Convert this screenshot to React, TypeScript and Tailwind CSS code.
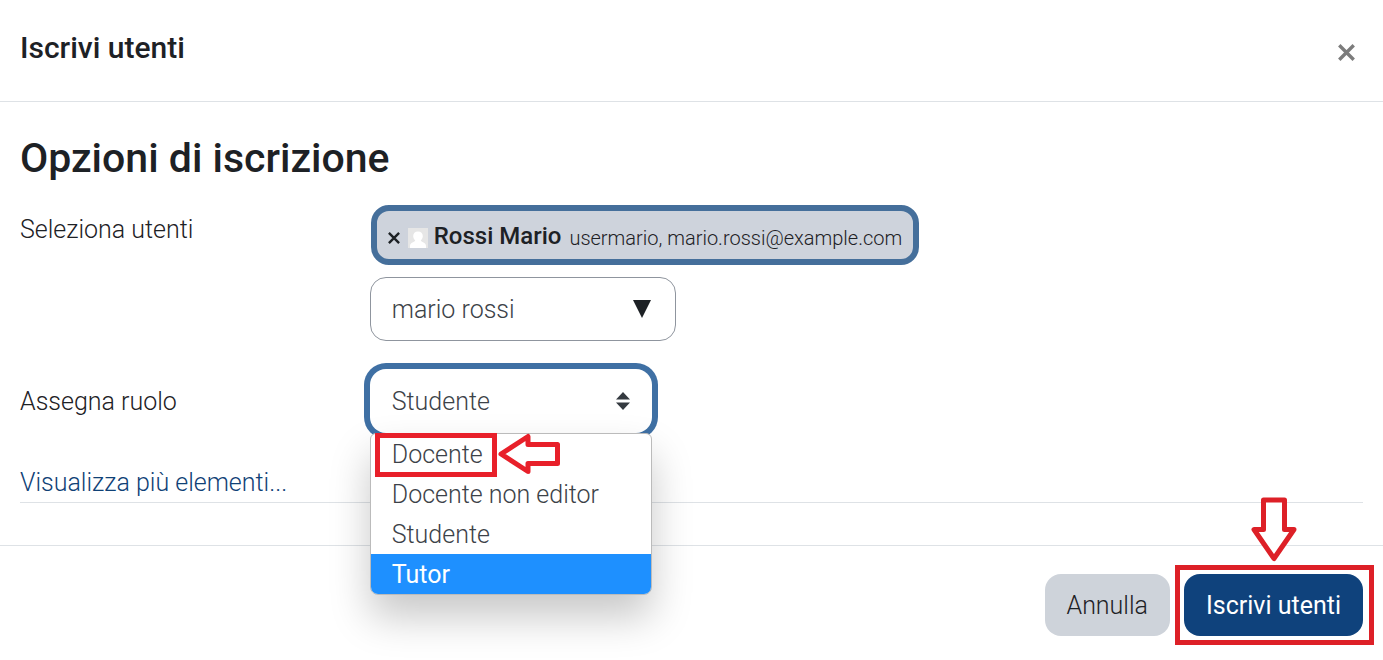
import React, { useState } from "react";

const roles = ["Docente", "Docente non editor", "Studente", "Tutor"];

interface FormRowProps {
  label: string;
  htmlFor: string;
  labelClass?: string;
  className?: string;
  children: React.ReactNode;
}

const FormRow: React.FC<FormRowProps> = ({ label, htmlFor, labelClass = "", className = "", children }) => (
  <div className={`flex ${className}`}>
    <label htmlFor={htmlFor} className={`w-1/4 shrink-0 leading-10 text-[#1d2125] ${labelClass}`}>
      {label}
    </label>
    <div className="flex min-w-0 flex-1 flex-col items-start gap-3 pl-3.5">{children}</div>
  </div>
);

const CrossIcon = ({ className }: { className: string }) => (
  <svg viewBox="0 0 16 16" className={className} stroke="currentColor" strokeWidth="3.2" fill="none" aria-hidden="true">
    <path d="M1.2 1.2 14.8 14.8M14.8 1.2 1.2 14.8" />
  </svg>
);

const Avatar = () => (
  <svg viewBox="0 0 20 20" className="size-5 shrink-0" aria-hidden="true">
    <rect width="20" height="20" fill="#e6e6e6" />
    <path
      d="M10 3.5c-3 0-4.800 2-4.800 4.600 0 1.900.8 3.400 2 4.300-.2 1.500-5.200 1.800-5.200 5.600v2h16v-2c0-3.800-5-4.100-5.200-5.600 1.200-.9 2-2.400 2-4.300 0-2.600-1.800-4.600-4.800-4.600z"
      fill="#fff"
    />
  </svg>
);

const UserChip = () => (
  <div className="ml-px flex h-[60px] items-center rounded-[18px] border-6 border-[#456f9b] bg-[#ced3dc] px-[11px] text-[#1d2125]">
    <button type="button" aria-label="Rimuovi Rossi Mario" className="mr-2 pt-1.5">
      <CrossIcon className="size-3" />
    </button>
    <div className="pt-1.5">
      <Avatar />
    </div>
    <span className="ml-1.5 pt-0.5 text-2xl font-medium">Rossi Mario</span>
    <small className="ml-2 pt-1.5 text-xl font-light">usermario, mario.rossi@example.com</small>
  </div>
);

const RoleMenu = ({ active, onPick }: { active: string; onPick: (r: string) => void }) => (
  <div className="absolute top-full left-0 z-10 w-full rounded-b-lg rounded-t-md border border-[#bbb] bg-white shadow-[0_22px_40px_rgba(0,0,0,0.22)]">
    <div role="listbox" aria-label="Ruoli" className="overflow-hidden rounded-b-[7px]">
      {roles.map((r) => (
        <button
          key={r}
          type="button"
          role="option"
          aria-selected={r === active}
          onClick={() => onPick(r)}
          className={`block h-10 w-full px-[21px] pt-0.5 text-left ${
            r === active ? "bg-[#1e90ff] font-normal text-white" : "text-[#3c4248]"
          }`}
        >
          {r}
        </button>
      ))}
    </div>
    {/* highlight on the first option */}
    <div className="pointer-events-none absolute -top-px left-1 h-11 w-[122px] border-5 border-[#e8202a]" />
    <svg
      viewBox="0 0 62 42"
      className="pointer-events-none absolute -top-px left-[127px] h-[42px] w-[62px]"
      fill="#fff"
      stroke="#e8202a"
      strokeWidth="5"
      strokeLinejoin="round"
      aria-hidden="true"
    >
      <path d="M3 21 30 3.500V11.500H59.500V30.500H30V38.500Z" />
    </svg>
  </div>
);

const App = () => {
  const [search, setSearch] = useState("mario rossi");
  const [role, setRole] = useState("Studente");
  const [active, setActive] = useState("Tutor");

  const pickRole = (r: string) => {
    setRole(r);
    setActive(r);
  };

  return (
    <div className="bg-white font-['Roboto','Liberation_Sans',sans-serif] text-[25px] font-light text-[#1d2125]">
      <header className="flex items-start justify-between border-b border-[#dee2e6] px-5 pt-7 pb-[25px]">
        <h1 className="text-[30px] leading-10 font-medium">Iscrivi utenti</h1>
        <button type="button" aria-label="Chiudi" className="flex h-12 items-center px-2 text-[#7c7c7c]">
          <CrossIcon className="size-[17px]" />
        </button>
      </header>

      <form onSubmit={(e) => e.preventDefault()}>
        <div className="px-5 pt-7">
          <h2 className="text-[41px] leading-14 font-medium">Opzioni di iscrizione</h2>

          <FormRow label="Seleziona utenti" htmlFor="users" labelClass="pt-[5px]" className="mt-[19px]">
            <UserChip />
            <div className="flex h-16 w-[306px] items-center rounded-2xl border border-[#8f959e] pr-6 pl-[21px]">
              <input
                id="users"
                type="text"
                value={search}
                onChange={(e) => setSearch(e.target.value)}
                className="min-w-0 flex-1 pt-0.5 text-[#3c4248] outline-none"
              />
              <button type="button" aria-label="Mostra suggerimenti">
                <svg viewBox="0 0 18 18" className="size-[18px]" fill="#1d2125" aria-hidden="true">
                  <path d="M0 0h18L9 18z" />
                </svg>
              </button>
            </div>
          </FormRow>

          <FormRow label="Assegna ruolo" htmlFor="role" labelClass="self-center pt-0.5" className="mt-7">
            <div className="relative w-[282px]">
              <select
                id="role"
                value={role}
                onChange={(e) => setRole(e.target.value)}
                className="block h-16 w-full appearance-none rounded-2xl bg-white px-[22px] pt-0.5 text-[#3c4248] ring-6 ring-[#3f70a4] outline-none"
              >
                {roles.map((r) => (
                  <option key={r} value={r}>
                    {r}
                  </option>
                ))}
              </select>
              <svg
                viewBox="0 0 14 18"
                className="pointer-events-none absolute top-[23px] right-[22px] h-[18px] w-3.5"
                fill="#343a40"
                aria-hidden="true"
              >
                <path d="M7 0l7 7.500H0zM7 18l7-7.500H0z" />
              </svg>
              <RoleMenu active={active} onPick={pickRole} />
            </div>
          </FormRow>

          <div className="mt-[30px] border-b border-[#dee2e6]">
            <a href="#more" className="block w-fit leading-[39px] text-[#0f4176]">
              Visualizza più elementi...
            </a>
          </div>
        </div>

        <footer className="mt-[42px] flex justify-end gap-3.5 border-t border-[#dee2e6] px-5 pt-7 pb-6">
          <button type="button" className="h-[62px] rounded-2xl bg-[#ced3da] px-[22px] pt-0.5 text-[#1d2125]">
            Annulla
          </button>
          <div className="relative">
            <button type="submit" className="h-[62px] rounded-2xl bg-[#0f427c] px-[22px] pt-0.5 font-normal text-white">
              Iscrivi utenti
            </button>
            <div className="pointer-events-none absolute -inset-y-[9px] -right-[11px] -left-[9px] border-5 border-[#dd2027]">
              <svg
                viewBox="0 0 46 66"
                className="absolute bottom-full left-1/2 mb-[7px] h-[66px] w-[46px] -translate-x-1/2"
                fill="#fff"
                stroke="#dd2027"
                strokeWidth="5"
                strokeLinejoin="round"
                aria-hidden="true"
              >
                <path d="M12.500 3H33.500V32.500H43L23 61.500 3 32.500H12.500Z" />
              </svg>
            </div>
          </div>
        </footer>
      </form>
    </div>
  );
};

export default App;
